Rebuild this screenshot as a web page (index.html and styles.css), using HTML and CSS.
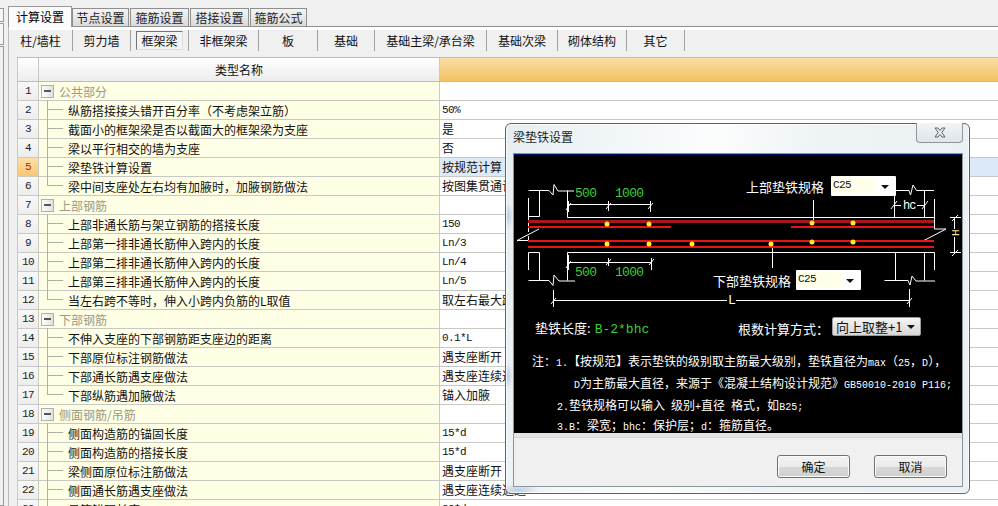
FILE: index.html
```html
<!DOCTYPE html>
<html lang="zh-CN">
<head>
<meta charset="utf-8">
<title>计算设置</title>
<link rel="stylesheet" href="styles.css">
</head>
<body>
<div class="page">
  <div class="edge">
    <span class="edge-box e1"></span>
    <span class="edge-box e2"></span>
    <span class="edge-box e3"></span>
  </div>
  <div class="pane">
    <div class="tabs">
      <span class="tab tab-on">计算设置</span>
      <span class="tab t2">节点设置</span>
      <span class="tab t3">箍筋设置</span>
      <span class="tab t3">搭接设置</span>
      <span class="tab t2">箍筋公式</span>
    </div>
    <div class="subnav">
      <span class="nav w64">柱/墙柱</span>
      <span class="nav w58">剪力墙</span>
      <span class="nav w58"><b class="pressed">框架梁</b></span>
      <span class="nav w70">非框架梁</span>
      <span class="nav w59">板</span>
      <span class="nav w57">基础</span>
      <span class="nav w112">基础主梁/承台梁</span>
      <span class="nav w71">基础次梁</span>
      <span class="nav w69">砌体结构</span>
      <span class="nav w58">其它</span>
    </div>
    <div class="grid">
      <div class="row head"><span class="num"></span><span class="name">类型名称</span><span class="val"></span></div>
      <div class="row grp"><span class="num">1</span><span class="name"><i class="box"></i>公共部分</span><span class="val"></span></div>
      <div class="row"><span class="num">2</span><span class="name"><i class="tree"></i>纵筋搭接接头错开百分率（不考虑架立筋）</span><span class="val"><em>50%</em></span></div>
      <div class="row"><span class="num">3</span><span class="name"><i class="tree"></i>截面小的框架梁是否以截面大的框架梁为支座</span><span class="val">是</span></div>
      <div class="row"><span class="num">4</span><span class="name"><i class="tree"></i>梁以平行相交的墙为支座</span><span class="val">否</span></div>
      <div class="row sel"><span class="num">5</span><span class="name"><i class="tree"></i>梁垫铁计算设置</span><span class="val">按规范计算</span></div>
      <div class="row"><span class="num">6</span><span class="name"><i class="tree end"></i>梁中间支座处左右均有加腋时，加腋钢筋做法</span><span class="val">按图集贯通计算</span></div>
      <div class="row grp"><span class="num">7</span><span class="name"><i class="box"></i>上部钢筋</span><span class="val"></span></div>
      <div class="row"><span class="num">8</span><span class="name"><i class="tree"></i>上部非通长筋与架立钢筋的搭接长度</span><span class="val"><em>150</em></span></div>
      <div class="row"><span class="num">9</span><span class="name"><i class="tree"></i>上部第一排非通长筋伸入跨内的长度</span><span class="val"><em>Ln/3</em></span></div>
      <div class="row"><span class="num">10</span><span class="name"><i class="tree"></i>上部第二排非通长筋伸入跨内的长度</span><span class="val"><em>Ln/4</em></span></div>
      <div class="row"><span class="num">11</span><span class="name"><i class="tree"></i>上部第三排非通长筋伸入跨内的长度</span><span class="val"><em>Ln/5</em></span></div>
      <div class="row"><span class="num">12</span><span class="name"><i class="tree end"></i>当左右跨不等时，伸入小跨内负筋的L取值</span><span class="val">取左右最大跨计算</span></div>
      <div class="row grp"><span class="num">13</span><span class="name"><i class="box"></i>下部钢筋</span><span class="val"></span></div>
      <div class="row"><span class="num">14</span><span class="name"><i class="tree"></i>不伸入支座的下部钢筋距支座边的距离</span><span class="val"><em>0.1*L</em></span></div>
      <div class="row"><span class="num">15</span><span class="name"><i class="tree"></i>下部原位标注钢筋做法</span><span class="val">遇支座断开</span></div>
      <div class="row"><span class="num">16</span><span class="name"><i class="tree"></i>下部通长筋遇支座做法</span><span class="val">遇支座连续通过</span></div>
      <div class="row"><span class="num">17</span><span class="name"><i class="tree end"></i>下部纵筋遇加腋做法</span><span class="val">锚入加腋</span></div>
      <div class="row grp"><span class="num">18</span><span class="name"><i class="box"></i>侧面钢筋/吊筋</span><span class="val"></span></div>
      <div class="row"><span class="num">19</span><span class="name"><i class="tree"></i>侧面构造筋的锚固长度</span><span class="val"><em>15*d</em></span></div>
      <div class="row"><span class="num">20</span><span class="name"><i class="tree"></i>侧面构造筋的搭接长度</span><span class="val"><em>15*d</em></span></div>
      <div class="row"><span class="num">21</span><span class="name"><i class="tree"></i>梁侧面原位标注筋做法</span><span class="val">遇支座断开</span></div>
      <div class="row"><span class="num">22</span><span class="name"><i class="tree"></i>侧面通长筋遇支座做法</span><span class="val">遇支座连续通过</span></div>
      <div class="row"><span class="num">23</span><span class="name"><i class="tree"></i>吊筋锚固长度</span><span class="val"><em>20*d</em></span></div>
    </div>
  </div>
</div>

<div class="dialog">
  <div class="titlebar">
    <span class="title">梁垫铁设置</span>
    <span class="close"><svg width="12" height="11" viewBox="0 0 12 11"><path class="x-mark" d="M1 1h3l2 2.500L8 1h3L7.800 5.500 11 10H8L6 7.500 4 10H1l3.200-4.500z"/></svg></span>
  </div>
  <div class="client">
    <div class="panel">
      <div class="canvas">
        <svg class="draw" width="448" height="162" viewBox="514 154 448 162">
          <g class="wht">
            <path d="M528.500 190.500H549L553 195L554 184.500L558 191H574"/>
            <path d="M539.500 190.500V216.500H528.500M567.500 190.500V217.500H934.500M528.500 198V232M517 240.500H528.500V236M517 240.500L539 229"/>
            <path d="M528.500 270V252.500H539.500V280.500H528.500M539.500 280.500H549L553 285.500L554 275L559 281H575M567.500 252.500V280.500M567.500 252.500H934.500"/>
            <path d="M568.500 204.500H651M568.500 201V212M608.500 201V211M650.500 201V212M566 210L571 203M606 209L611 203M648 209L653 203"/>
            <path d="M568.500 262.500H651M568.500 255V270M608.500 258V266M651.500 258V270M566 268L571 261M606 265L611 259M649 265L654 259"/>
            <path d="M553.500 300.500H727M736 300.500H909.500M553.500 290V307M909.500 289V307M551 304L556 298M907 304L912 298"/>
            <path d="M895 190.500H909L910.500 195L913 185L916.500 190.500H934"/>
            <path d="M894.500 190.500V217M924.500 190.500V217M934.500 199V229H946L924 240.500"/>
            <path d="M895 205.500H901M917 205.500H925M891 209L897 201M922 209L928 201"/>
            <path d="M934.500 252.500V270M895.500 252.500V280.500M924.500 252.500V280.500M884.500 280.500H908L910 285L912 276L916 281H935"/>
            <path d="M950 217.500H961M950 252.500H961M954.500 217V229M954.500 237V252M952 221L958 215M952 256L958 250"/>
            <path d="M813.500 200V223M772.500 243V268"/>
          </g>
          <rect class="bar-dark" x="528" y="220" width="406" height="3"/>
          <rect class="bar" x="528" y="226" width="143" height="2"/>
          <rect class="bar" x="791" y="226" width="143" height="2"/>
          <rect class="bar" x="528" y="240" width="406" height="2"/>
          <rect class="bar" x="528" y="246" width="406" height="2"/>
          <g class="dot">
            <circle cx="607" cy="224" r="2.500"/>
            <circle cx="649" cy="224" r="2.500"/>
            <circle cx="812" cy="223" r="2.500"/>
            <circle cx="853" cy="223" r="2.500"/>
            <circle cx="607" cy="244" r="2.500"/>
            <circle cx="649" cy="244" r="2.500"/>
            <circle cx="692" cy="244" r="2.500"/>
            <circle cx="771" cy="244" r="2.500"/>
            <circle cx="812" cy="242" r="2.500"/>
            <circle cx="853" cy="242" r="2.500"/>
          </g>
          <text class="g-txt" x="575" y="197">500</text>
          <text class="g-txt" x="615" y="197">1000</text>
          <text class="g-txt" x="575" y="276">500</text>
          <text class="g-txt" x="615" y="276">1000</text>
          <text class="hc-txt" x="903" y="209">hc</text>
          <text class="w-mono" x="728" y="304">L</text>
          <text class="y-mono" x="952" y="237" transform="rotate(-90 955 233)">H</text>
          <text class="w-txt" x="746" y="192">上部垫铁规格</text>
          <text class="w-txt" x="713" y="286">下部垫铁规格</text>
        </svg>
        <div class="combo c-top"><span class="combo-val">C25</span><i class="arrow"></i></div>
        <div class="combo c-low"><span class="combo-val">C25</span><i class="arrow"></i></div>
      </div>
      <div class="calc">
        <span class="calc-l">垫铁长度:<span class="green">B-2*bhc</span></span>
        <span class="calc-r">根数计算方式：</span>
        <span class="btn-combo">向上取整+1<i class="arrow"></i></span>
      </div>
      <div class="notes">
        <p class="n1">注：<small>1.</small>【按规范】表示垫铁的级别取主筋最大级别，垫铁直径为<small>max</small>（<small>25</small>，<small>D</small>），</p>
        <p class="n2"><small>D</small>为主筋最大直径，来源于《混凝土结构设计规范》<small>GB50010-2010 P116;</small></p>
        <p class="n3"><small>2.</small>垫铁规格可以输入<small> </small>级别<small>+</small>直径<small> </small>格式，如<small>B25;</small></p>
        <p class="n4"><small>3.B</small>：梁宽；<small>bhc</small>：保护层；<small>d</small>：箍筋直径。</p>
      </div>
    </div>
    <div class="sep"></div>
    <div class="footer">
      <span class="btn">确定</span>
      <span class="btn">取消</span>
    </div>
  </div>
</div>
</body>
</html>
```
FILE: styles.css
```css
* { box-sizing: border-box; }
html, body { margin: 0; padding: 0; width: 998px; height: 506px; overflow: hidden; }
body { background: #f0f0f0; font: 12px/1 "Noto Sans CJK SC", sans-serif; color: #111; }
.page { display: flex; width: 998px; height: 506px; overflow: hidden; }
.edge { width: 8px; flex: none; display: flex; flex-direction: column; padding-top: 8px; gap: 1px; }
.edge-box { display: block; width: 4px; border: 1px solid #9a9a9a; border-left: 0; background: #f6f6f6; }
.e1 { height: 14px; }
.e2 { height: 22px; }
.e3 { flex: 1; background: #f0f0f0; }
.pane { flex: 1; min-width: 0; padding-top: 6px; }

.tabs { display: flex; height: 21px; border-bottom: 1px solid #8f8f8f; align-items: flex-end; }
.tab { display: flex; align-items: center; justify-content: center; height: 18px; margin-left: 1px; background: linear-gradient(#f4f4f4, #dadada); border: 1px solid #8f8f8f; border-bottom: 0; color: #222; }
.t2 { width: 57px; }
.t3 { width: 59px; }
.tab-on { width: 64px; height: 21px; margin: 0 0 -1px; background: #fbfbfb; color: #000; border-color: #999; position: relative; }
.tab-on + .tab { margin-left: 0; }

.subnav { display: flex; align-items: flex-start; height: 30px; background: linear-gradient(#fff 0, #fff 3px, #f0f0f0 3px); padding-top: 3px; border-left: 1px solid #bbb; }
.nav { display: flex; align-items: center; justify-content: center; height: 21px; border-right: 1px solid #a0a0a0; color: #111; }
.w64 { width: 64px; }
.w58 { width: 58px; }
.w70 { width: 70px; }
.w59 { width: 59px; }
.w57 { width: 57px; }
.w112 { width: 112px; }
.w71 { width: 71px; }
.w69 { width: 69px; }
.pressed { display: flex; align-items: center; justify-content: center; width: 47px; height: 19px; font-weight: 400; border: 1px solid; border-color: #777 #ddd #ddd #777; background: #f4f4f4; }

.grid { padding-left: 8px; border-left: 1px solid #bbb; height: 480px; }
.row { display: flex; height: 19px; border-bottom: 1px solid #c9c9c3; }
.num { flex: none; width: 22px; display: flex; align-items: center; justify-content: center; border-left: 1px solid #c9c9c3; border-right: 1px solid #c9c9c3; background: linear-gradient(#f8f8f8, #ededed); font: 11px "Liberation Mono", monospace; letter-spacing: -.6px; color: #222; }
.name { flex: none; width: 401px; display: flex; align-items: center; background: #ffffe6; border-right: 1px solid #c9c9c3; padding: 1px 0 0 2px; white-space: nowrap; color: #111; }
.val { flex: 1; min-width: 0; display: flex; align-items: center; padding-left: 2px; background: #fff; white-space: nowrap; overflow: hidden; }
.val em { font: normal 11px "Liberation Mono", monospace; letter-spacing: -.6px; }
.head { height: 25px; border-top: 1px solid #bcbcbc; border-bottom-color: #bcbcbc; }
.head .num { background: linear-gradient(#fff, #ececec); }
.head .name { justify-content: center; background: linear-gradient(#fff, #ececec); padding: 0; }
.head .val { background: linear-gradient(#fadfa6, #f2c15f); }
.grp .name { color: #9a9a80; }
.sel .num { background: linear-gradient(#fde0a8, #f9c571); color: #b03000; }
.sel .val { background: #dceaf8; }
.box { flex: none; width: 13px; height: 13px; margin-right: 5px; margin-top: -1px; border: 1px solid #aeb2ae; background: linear-gradient(90deg, #fff, #e0e0e0); position: relative; }
.box::after { content: ""; position: absolute; left: 2px; right: 2px; top: 4px; height: 2px; background: #555; }
.tree { flex: none; width: 27px; height: 19px; position: relative; margin-top: -2px; }
.tree::before { content: ""; position: absolute; left: 6px; top: 0; bottom: 0; border-left: 1px solid #b0b0a0; }
.tree::after { content: ""; position: absolute; left: 6px; top: 9px; width: 16px; border-top: 1px solid #b0b0a0; }
.tree.end::before { bottom: 9px; }

.dialog { position: absolute; left: 505px; top: 123px; width: 465px; height: 371px; border: 1px solid #5a6468; border-radius: 6px; background: radial-gradient(ellipse 5px 14px at 2px 92px, #b9cfe4, transparent), radial-gradient(ellipse 5px 14px at 2px 252px, #b9cfe4, transparent), radial-gradient(ellipse 22px 6px at 12px 366px, #b9cfe4, transparent), linear-gradient(100deg, #e6eef2 0, #fbfdfd 40%, #eef3f5 60%, #eaf0f3 100%); padding: 0 6px 6px 7px; box-shadow: inset 0 0 0 1px rgba(255,255,255,.7); display: flex; flex-direction: column; }
.titlebar { height: 29px; flex: none; display: flex; align-items: flex-start; justify-content: space-between; }
.title { margin-top: 7px; font-size: 12px; color: #222; }
.close { width: 47px; height: 20px; margin-top: -1px; display: flex; align-items: center; justify-content: center; border: 1px solid #8f979b; border-top: 0; border-radius: 0 0 4px 4px; background: linear-gradient(#f2f5f7, #dfe4e7); }
.x-mark { fill: #e8eef0; stroke: #5c6468; stroke-width: 1; }
.client { flex: 1; min-height: 0; display: flex; flex-direction: column; border: 1px solid #8c9498; background: #f0f0f0; }
.panel { height: 279px; flex: none; background: #000; color: #fff; border-top: 1px solid #001060; overflow: hidden; }
.canvas { position: relative; height: 162px; margin-top: -1px; }
.draw { display: block; }
.wht path { fill: none; stroke: #fff; stroke-width: 1; }
.bar { fill: #ee1111; }
.bar-dark { fill: #a51818; }
.dot circle { fill: #ffee22; }
.g-txt { fill: #38d038; font: 13px "Liberation Mono", monospace; letter-spacing: -.7px; }
.w-mono { fill: #fff; font: 13px "Liberation Mono", monospace; }
.hc-txt { fill: #fff; font: 12px "Liberation Mono", monospace; letter-spacing: -1px; }
.y-mono { fill: #eeddaa; font: 11px "Liberation Mono", monospace; }
.w-txt { fill: #fff; font: 13px "Noto Sans CJK SC", sans-serif; }
.combo { position: absolute; width: 65px; height: 20px; background: #fff; border-radius: 1px; color: #111; font: 10px "Liberation Mono", monospace; }
.c-top { left: 317px; top: 22px; }
.c-low { left: 282px; top: 116px; }
.combo-val { position: absolute; left: 1px; top: 2px; width: 44px; height: 15px; padding: 1px; font-size: 11px; letter-spacing: -.6px; background: #ffffea; }
.arrow { position: absolute; right: 7px; top: 9px; border: 4px solid transparent; border-top: 4px solid #111; border-bottom: 0; }
.calc { position: relative; display: flex; align-items: center; height: 21px; margin-top: 2px; padding-left: 21px; font-size: 13px; }
.calc-l { width: 203px; }
.green { color: #38d038; font: 13px "Liberation Mono", monospace; margin-left: 4px; }
.btn-combo { position: absolute; left: 318px; top: -1px; width: 89px; height: 19px; display: flex; align-items: center; padding-left: 3px; background: linear-gradient(#f5f5f5, #d6d6d6); border: 1px solid #9a9a9a; border-radius: 2px; color: #111; }
.btn-combo .arrow { top: 7px; right: 5px; }
.notes { padding-top: 12px; line-height: 20px; color: #fff; font-size: 12px; }
.notes p { margin: 0; white-space: pre; height: 22px; overflow: visible; }
.notes .n3 { height: 20px; }
.notes small { font: 10px/1 "Liberation Mono", monospace; }
.n1 { padding-left: 18px; }
.n2 { padding-left: 60px; }
.n3, .n4 { padding-left: 43px; }
.sep { height: 5px; flex: none; background: #e4e4e4; border-bottom: 1px solid #d4d4d4; }
.footer { flex: 1; display: flex; justify-content: flex-end; align-items: flex-start; gap: 24px; padding: 17px 15px 0 0; background: #f0f0f0; }
.btn { width: 73px; height: 23px; display: flex; align-items: center; justify-content: center; border: 1px solid #707070; border-radius: 3px; background: linear-gradient(#f2f2f2 0, #ebebeb 50%, #d8d8d8 52%, #cfcfcf 100%); box-shadow: inset 0 0 0 1px #fbfbfb; color: #111; }
```
